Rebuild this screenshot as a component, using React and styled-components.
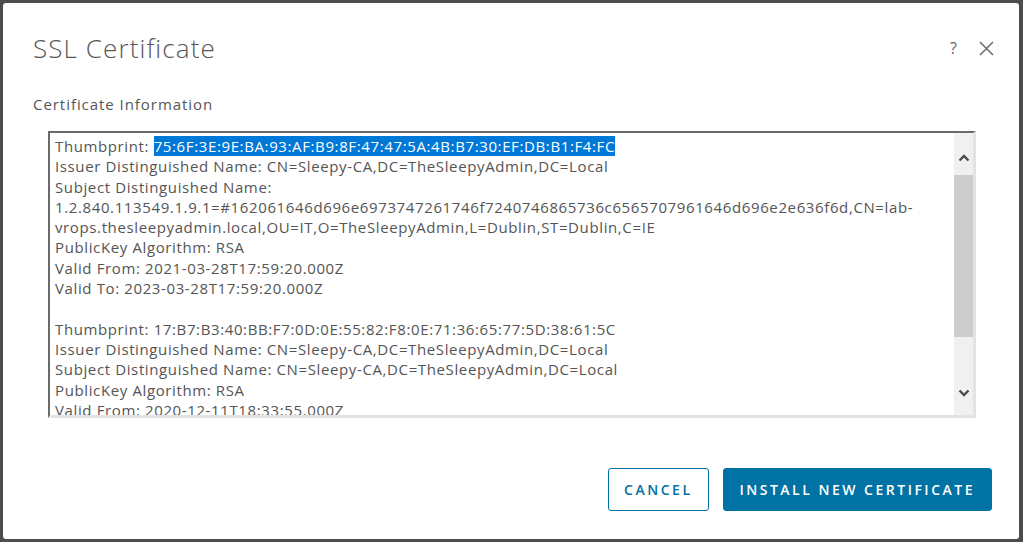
import React from "react";
import styled, { createGlobalStyle } from "styled-components";

const Global = createGlobalStyle`
  html, body { margin: 0; padding: 0; }
  body {
    background: #4d4d4d;
    font-family: "Open Sans", "Liberation Sans", sans-serif;
  }
  #root { padding: 3px 4px 3px 3px; }
`;

const Modal = styled.div`
  box-sizing: border-box;
  width: 1016px;
  height: 536px;
  background: #fff;
  border-radius: 3px;
  padding: 30px 27px 0 30px;
  display: flex;
  flex-direction: column;
  color: #565656;
`;

const Header = styled.div`
  display: flex;
  align-items: center;
  justify-content: space-between;
  height: 30px;
`;

const Title = styled.h1`
  margin: 0;
  font-size: 26px;
  font-weight: 300;
  color: #565656;
  letter-spacing: 1.1px;
`;

const HeaderIcons = styled.div`
  display: flex;
  align-items: center;
  gap: 22px;
  margin-right: -2px;
`;

const HelpIcon = styled.span`
  font-size: 16px;
  color: #666;
  line-height: 1;
`;

const Subtitle = styled.div`
  margin-top: 31px;
  font-size: 15px;
  line-height: 20px;
  letter-spacing: 0.95px;
  color: #565656;
`;

const Box = styled.div`
  box-sizing: border-box;
  margin: 17px 16px 0 15px;
  height: 287px;
  display: flex;
  border-top: 2px solid #6a6a6a;
  border-left: 2px solid #6a6a6a;
  border-right: 3px solid #e3e3e3;
  border-bottom: 3px solid #e3e3e3;
`;

const Content = styled.div`
  flex: 1;
  overflow: hidden;
  padding: 3px 0 0 5px;
  font-size: 15px;
  line-height: 20.3px;
  letter-spacing: 0.62px;
  color: #555;
`;

const Line = styled.div`
  white-space: nowrap;
  height: 20.3px;
`;

const Selected = styled.span`
  background: #0078d7;
  color: #fff;
`;

const Scrollbar = styled.div`
  width: 19px;
  background: #f0f0f0;
  display: flex;
  flex-direction: column;
`;

const ArrowButton = styled.div`
  height: ${(p) => p.$h}px;
  display: flex;
  justify-content: center;
  align-items: ${(p) => (p.$down ? "flex-start" : "flex-end")};
  padding: ${(p) => (p.$down ? "14px 0 0" : "0 0 13px")};
  box-sizing: border-box;
`;

const Thumb = styled.div`
  height: 162px;
  background: #cdcdcd;
`;

const Track = styled.div`
  flex: 1;
`;

const Footer = styled.div`
  margin-top: 50px;
  display: flex;
  justify-content: flex-end;
  gap: 14px;
`;

const Button = styled.button`
  box-sizing: border-box;
  height: 43px;
  padding: 0 ${(p) => (p.$primary ? 16 : 15)}px;
  border-radius: 3px;
  border: 1px solid #0072a3;
  background: ${(p) => (p.$primary ? "#0072a3" : "#fff")};
  color: ${(p) => (p.$primary ? "#fff" : "#0072a3")};
  font-family: "Open Sans", "Liberation Sans", sans-serif;
  font-weight: 600;
  font-size: 14px;
  letter-spacing: 2.5px;
  text-transform: uppercase;
  cursor: pointer;
`;

const Chevron = ({ down }) => (
  <svg width="12" height="8" viewBox="0 0 12 8">
    <polyline
      points={down ? "1.5,1.5 6,6 10.5,1.5" : "1.5,6.5 6,2 10.5,6.5"}
      fill="none"
      stroke="#4a4a4a"
      strokeWidth="2.4"
    />
  </svg>
);

const CloseIcon = () => (
  <svg width="15" height="15" viewBox="0 0 15 15">
    <path d="M1 1 L14 14 M14 1 L1 14" stroke="#6a6a6a" strokeWidth="1.5" fill="none" />
  </svg>
);

const lines = [
  null,
  "Issuer Distinguished Name: CN=Sleepy-CA,DC=TheSleepyAdmin,DC=Local",
  "Subject Distinguished Name:",
  "1.2.840.113549.1.9.1=#162061646d696e6973747261746f7240746865736c6565707961646d696e2e636f6d,CN=lab-",
  "vrops.thesleepyadmin.local,OU=IT,O=TheSleepyAdmin,L=Dublin,ST=Dublin,C=IE",
  "PublicKey Algorithm: RSA",
  "Valid From: 2021-03-28T17:59:20.000Z",
  "Valid To: 2023-03-28T17:59:20.000Z",
  "",
  "Thumbprint: 17:B7:B3:40:BB:F7:0D:0E:55:82:F8:0E:71:36:65:77:5D:38:61:5C",
  "Issuer Distinguished Name: CN=Sleepy-CA,DC=TheSleepyAdmin,DC=Local",
  "Subject Distinguished Name: CN=Sleepy-CA,DC=TheSleepyAdmin,DC=Local",
  "PublicKey Algorithm: RSA",
  "Valid From: 2020-12-11T18:33:55.000Z",
];

export default function App() {
  return (
    <>
      <Global />
      <Modal>
        <Header>
          <Title>SSL Certificate</Title>
          <HeaderIcons>
            <HelpIcon>?</HelpIcon>
            <CloseIcon />
          </HeaderIcons>
        </Header>
        <Subtitle>Certificate Information</Subtitle>
        <Box>
          <Content>
            {lines.map((l, i) =>
              l === null ? (
                <Line key={i}>
                  Thumbprint:{" "}
                  <Selected>75:6F:3E:9E:BA:93:AF:B9:8F:47:47:5A:4B:B7:30:EF:DB:B1:F4:FC</Selected>
                </Line>
              ) : (
                <Line key={i}>{l}</Line>
              )
            )}
          </Content>
          <Scrollbar>
            <ArrowButton $h={42}>
              <Chevron />
            </ArrowButton>
            <Thumb />
            <Track />
            <ArrowButton $h={40} $down>
              <Chevron down />
            </ArrowButton>
          </Scrollbar>
        </Box>
        <Footer>
          <Button>Cancel</Button>
          <Button $primary>Install New Certificate</Button>
        </Footer>
      </Modal>
    </>
  );
}
